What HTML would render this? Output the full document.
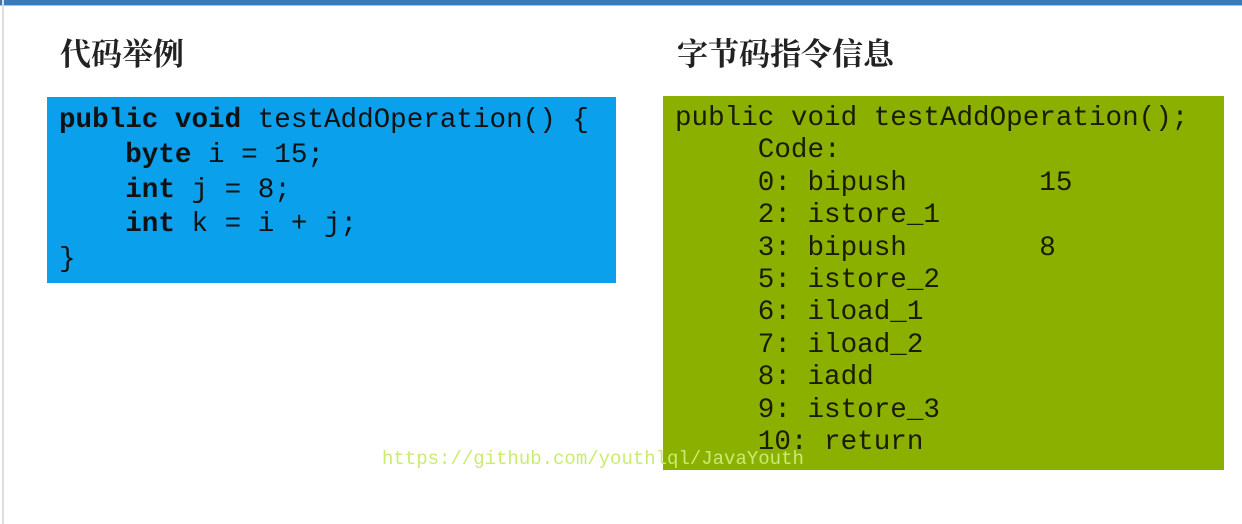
<!DOCTYPE html>
<html><head><meta charset="utf-8"><style>
body{margin:0;width:1242px;height:524px;background:#fff;position:relative;overflow:hidden;font-family:"Liberation Mono",monospace}
.top{position:absolute;left:0;top:0;width:1242px;height:5px;background:#3a7ab8;border-bottom:1px solid #9cc}
.lft{position:absolute;left:2px;top:0;width:2px;height:524px;background:#ddd}
h1{position:absolute;margin:0;font:bold 31px "Noto Serif CJK SC","Noto Sans CJK SC",serif;color:#222;top:32px;line-height:40px}
.box{position:absolute;font-size:27.6px;color:#111;box-sizing:border-box;padding:7px 0 0 12px}
.box div{white-space:pre}
.blue{left:47px;top:97px;width:569px;height:186px;background:#0aa0ec}
.green{left:663px;top:96px;width:561px;height:374px;background:#8cb000;color:#1a1c00}
.blue div{height:34.8px;line-height:34.8px}
.green div{height:32.4px;line-height:32.4px}
b{font-weight:bold}
.wm{position:absolute;left:382px;top:448px;font-size:19px;color:#c9ec70;white-space:pre;z-index:2}
</style></head><body>
<div class="top"></div><div class="lft"></div>
<h1 style="left:60px">代码举例</h1>
<h1 style="left:677px">字节码指令信息</h1>
<div class="box blue"><div><b>public void</b> testAddOperation() {</div><div>    <b>byte</b> i = 15;</div><div>    <b>int</b> j = 8;</div><div>    <b>int</b> k = i + j;</div><div>}</div></div>
<div class="box green"><div>public void testAddOperation();</div><div>     Code:</div><div>     0: bipush        15</div><div>     2: istore_1</div><div>     3: bipush        8</div><div>     5: istore_2</div><div>     6: iload_1</div><div>     7: iload_2</div><div>     8: iadd</div><div>     9: istore_3</div><div>     10: return</div></div>
<div class="wm">https://github.com/youthlql/JavaYouth</div>
</body></html>
